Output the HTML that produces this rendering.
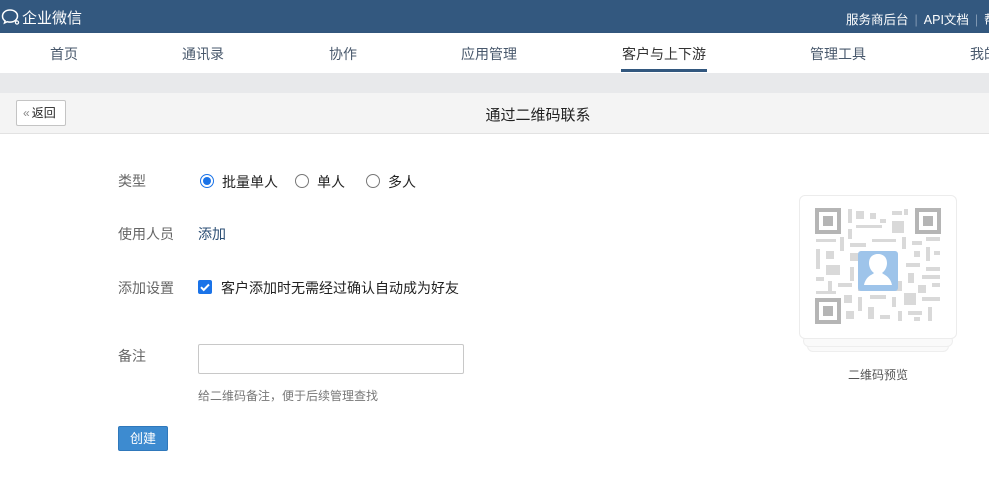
<!DOCTYPE html>
<html><head><meta charset="utf-8">
<style>
*{margin:0;padding:0;box-sizing:border-box}
body{width:989px;height:483px;overflow:hidden;background:#fff;font-family:"Liberation Sans","Noto Sans CJK SC",sans-serif;position:relative;color:#333}
.hd{position:absolute;left:0;top:0;width:989px;height:33px;background:#33587f;color:#fff}
.logo{position:absolute;left:22px;top:7px;font-size:15px}
.hr{position:absolute;left:846px;top:9px;font-size:12.5px;white-space:nowrap}
.hr span.s{color:#7f97b2;margin:0 6px}
.nav{position:absolute;left:0;top:33px;width:989px;height:40px;background:#fff;box-shadow:0 1px 3px rgba(0,0,0,.12)}
.nav div{position:absolute;top:11px;font-size:14px;color:#48586c;transform:translateX(-50%);white-space:nowrap}
.nav .act{color:#333}
.ul{position:absolute;left:621px;top:36px;width:86px;height:3px;background:#33587f}
.gb{position:absolute;left:0;top:73px;width:989px;height:20px;background:#e8e9eb}
.tb{position:absolute;left:0;top:93px;width:989px;height:41px;background:#f4f4f4;border-bottom:1px solid #e2e2e2}
.back{position:absolute;left:16px;top:7px;width:50px;height:26px;border:1px solid #c4c4c4;border-radius:2px;background:#fff;font-size:12px;line-height:24px;padding-left:6px;color:#222}
.back i{font-style:normal;color:#888;margin-right:2px}
.tt{position:absolute;left:0;width:1076px;text-align:center;top:11px;font-size:15px;color:#222}
.lb{position:absolute;left:118px;font-size:14px;color:#666}
.v{position:absolute;font-size:14px;color:#222}
.rad{position:absolute;width:14px;height:14px;border:1px solid #777;border-radius:50%;background:#fff}
.rad.on{border-color:#1a73e8}
.rad.on:after{content:"";position:absolute;left:2px;top:2px;width:8px;height:8px;border-radius:50%;background:#1a73e8}
.cb{position:absolute;left:198px;top:280px;width:14px;height:14px;border-radius:2px;background:#1a73e8}
.inp{position:absolute;left:198px;top:344px;width:266px;height:30px;border:1px solid #c8c8c8;border-radius:2px}
.hint{position:absolute;left:198px;top:387px;font-size:12px;color:#777}
.btn{position:absolute;left:118px;top:426px;width:50px;height:25px;background:#3d8bd0;border:1px solid #2f78bb;border-radius:2px;color:#fff;font-size:13px;text-align:center;line-height:23px}
.card{position:absolute;left:799px;top:195px;width:158px;height:144px;border:1px solid #ececec;border-radius:6px;background:#fff;z-index:3}
.c2{position:absolute;left:803px;top:335px;width:150px;height:12px;border:1px solid #eee;border-radius:6px;background:#fafafa;z-index:2}
.c3{position:absolute;left:807px;top:340px;width:142px;height:12px;border:1px solid #eee;border-radius:6px;background:#fafafa;z-index:1}
.ql{position:absolute;left:848px;top:366px;font-size:12px;color:#555}
</style></head><body>
<div class="hd">
<svg style="position:absolute;left:1px;top:8px" width="20" height="18" viewBox="0 0 20 18"><path d="M9 2C4.5 2 1.5 4.8 1.5 8.2c0 2 1 3.6 2.6 4.7L3.5 15l2.6-1.3c.9.3 1.9.4 2.9.4 4.5 0 7.5-2.8 7.5-6.1S13.5 2 9 2z" fill="none" stroke="#fff" stroke-width="1.5"/><circle cx="16" cy="14.5" r="1.6" fill="none" stroke="#fff" stroke-width="1.2"/></svg>
<div class="logo">企业微信</div>
<div class="hr">服务商后台<span class="s">|</span>API文档<span class="s">|</span>帮</div>
</div>
<div class="nav">
<div style="left:64px">首页</div>
<div style="left:203px">通讯录</div>
<div style="left:343px">协作</div>
<div style="left:489px">应用管理</div>
<div class="act" style="left:664px">客户与上下游</div>
<div style="left:838px">管理工具</div>
<div style="left:998px">我的企业</div>
<span class="ul"></span>
</div>
<div class="gb"></div>
<div class="tb"><div class="back"><i>«</i>返回</div><div class="tt">通过二维码联系</div></div>

<div class="lb" style="top:171px">类型</div>
<span class="rad on" style="left:200px;top:174px"></span><div class="v" style="left:222px;top:172px">批量单人</div>
<span class="rad" style="left:295px;top:174px"></span><div class="v" style="left:317px;top:172px">单人</div>
<span class="rad" style="left:366px;top:174px"></span><div class="v" style="left:388px;top:172px">多人</div>

<div class="lb" style="top:224px">使用人员</div>
<div class="v" style="left:198px;top:224px;color:#2b4e74">添加</div>

<div class="lb" style="top:278px">添加设置</div>
<div class="cb"><svg width="14" height="14" viewBox="0 0 14 14"><path d="M3 7.2l2.7 2.7L11 4.5" fill="none" stroke="#fff" stroke-width="2"/></svg></div>
<div class="v" style="left:221px;top:278px">客户添加时无需经过确认自动成为好友</div>

<div class="lb" style="top:346px">备注</div>
<div class="inp"></div>
<div class="hint">给二维码备注，便于后续管理查找</div>
<div class="btn">创建</div>

<div class="c3"></div><div class="c2"></div>
<div class="card">
<svg style="position:absolute;left:14px;top:11px" width="128" height="118" viewBox="0 0 128 118">
<g fill="none" stroke="#b5b5b5" stroke-width="4"><rect x="3" y="3" width="22" height="22"/><rect x="103" y="3" width="22" height="22"/><rect x="3" y="93" width="22" height="22"/></g>
<g fill="#b5b5b5"><rect x="9" y="9" width="10" height="10"/><rect x="109" y="9" width="10" height="10"/><rect x="9" y="99" width="10" height="10"/></g>
<g fill="#d9d9d9">
<rect x="34" y="2" width="4" height="14"/><rect x="42" y="4" width="8" height="8"/><rect x="56" y="6" width="6" height="6"/><rect x="66" y="12" width="6" height="4"/><rect x="78" y="4" width="10" height="4"/><rect x="90" y="2" width="4" height="6"/><rect x="42" y="18" width="26" height="3"/><rect x="78" y="14" width="12" height="12"/><rect x="34" y="22" width="4" height="10"/>
<rect x="2" y="32" width="20" height="3"/><rect x="26" y="30" width="4" height="14"/><rect x="36" y="36" width="16" height="4"/><rect x="58" y="32" width="24" height="3"/><rect x="88" y="30" width="4" height="12"/><rect x="98" y="34" width="10" height="4"/><rect x="112" y="30" width="14" height="4"/>
<rect x="2" y="42" width="4" height="20"/><rect x="12" y="44" width="8" height="8"/><rect x="36" y="46" width="8" height="8"/><rect x="100" y="44" width="6" height="6"/><rect x="112" y="40" width="4" height="14"/><rect x="120" y="44" width="6" height="4"/>
<rect x="12" y="58" width="14" height="10"/><rect x="36" y="60" width="4" height="14"/><rect x="92" y="56" width="14" height="4"/><rect x="112" y="60" width="14" height="4"/><rect x="94" y="66" width="6" height="10"/><rect x="108" y="68" width="18" height="4"/>
<rect x="2" y="70" width="8" height="4"/><rect x="14" y="74" width="4" height="10"/><rect x="24" y="76" width="14" height="4"/><rect x="44" y="74" width="4" height="10"/><rect x="54" y="78" width="18" height="4"/><rect x="78" y="74" width="10" height="10"/><rect x="104" y="78" width="8" height="8"/><rect x="118" y="76" width="8" height="4"/>
<rect x="2" y="84" width="20" height="3"/><rect x="30" y="88" width="8" height="8"/><rect x="44" y="90" width="4" height="14"/><rect x="56" y="88" width="16" height="4"/><rect x="78" y="90" width="4" height="10"/><rect x="90" y="86" width="12" height="12"/><rect x="108" y="90" width="18" height="4"/>
<rect x="32" y="104" width="8" height="8"/><rect x="54" y="100" width="6" height="12"/><rect x="66" y="108" width="10" height="4"/><rect x="84" y="104" width="4" height="10"/><rect x="94" y="104" width="14" height="4"/><rect x="114" y="100" width="4" height="14"/><rect x="100" y="110" width="6" height="4"/>
</g>
<rect x="44" y="44" width="40" height="40" rx="3" fill="#9ec4ea"/>
<path d="M50 78c2-9 8-10 10-12c-3-2-5-6-5-10c0-6 4-9 9-9s9 3 9 9c0 4-2 8-5 10c2 2 8 3 10 12z" fill="#fff"/>
</svg>
</div>
<div class="ql">二维码预览</div>
</body></html>
